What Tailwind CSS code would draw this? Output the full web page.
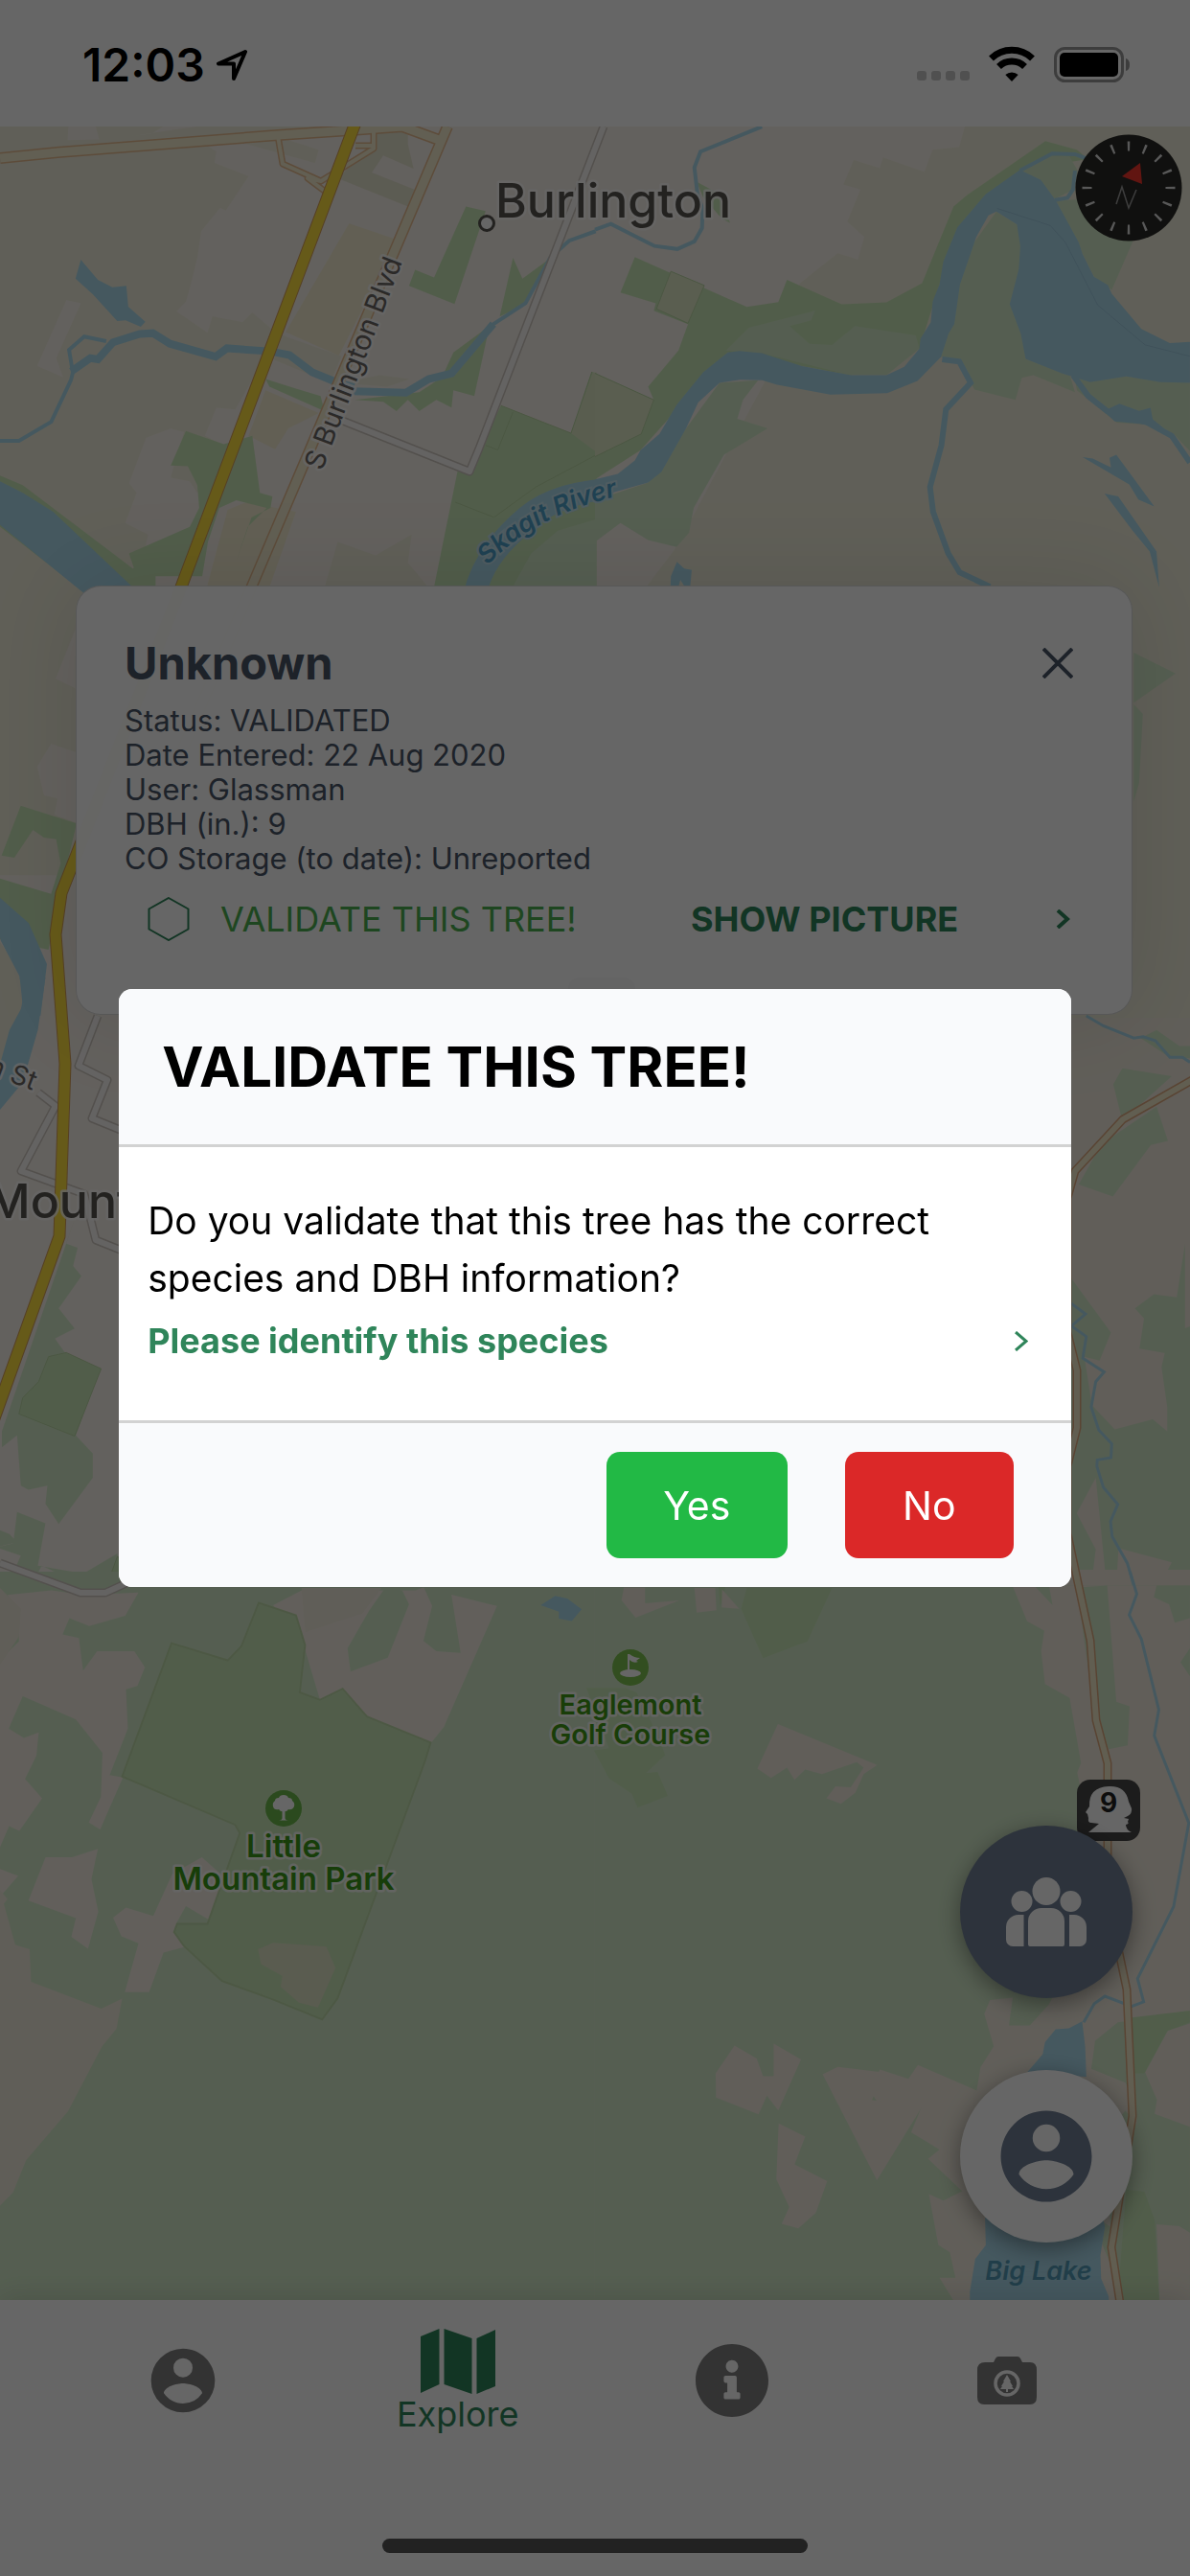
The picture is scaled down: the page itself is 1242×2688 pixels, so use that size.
<!DOCTYPE html>
<html lang="en">
<head>
<meta charset="utf-8">
<meta name="viewport" content="width=device-width, initial-scale=1">
<title>Explore</title>
<script src="https://cdn.jsdelivr.net/npm/@tailwindcss/browser@4"></script>
</head>
<body class="bg-white font-['Inter','Liberation_Sans',sans-serif]">
<div class="flex min-h-screen flex-col">

  <!-- Status bar -->
  <header class="flex h-[132px] shrink-0 items-start justify-between pl-[86px] pr-[62px] pt-[38px] text-black">
    <div class="flex items-center gap-3">
      <span class="text-[48px] leading-[60px] font-semibold">12:03</span>
      <svg class="size-8" viewBox="0 0 32 32" fill="none" stroke="currentColor" stroke-width="4" stroke-linejoin="round" aria-hidden="true"><path d="M30 2 2 14.500h16v15.500z"/></svg>
    </div>
    <div class="flex items-center gap-5 pt-2" aria-hidden="true">
      <svg class="h-10 w-[55px]" viewBox="0 0 55 40"><g fill="#c8c8c8"><rect y="28" width="10" height="10" rx="3"/><rect x="15" y="28" width="10" height="10" rx="3"/><rect x="30" y="28" width="10" height="10" rx="3"/><rect x="45" y="28" width="10" height="10" rx="3"/></g></svg>
      <svg class="h-10 w-12" viewBox="0 0 48 40" fill="none" stroke="#000" stroke-width="7"><path d="M2.500 15a31 31 0 0 1 43 0"/><path d="M10.500 23.500a19.500 19.500 0 0 1 27 0"/><path d="M24 39l-6.700-7a10 10 0 0 1 13.400 0z" fill="#000" stroke="none"/></svg>
      <svg class="h-10 w-20" viewBox="0 0 80 40"><rect x="1.500" y="4.500" width="70" height="34" rx="10" fill="none" stroke="#999" stroke-width="3"/><rect x="6" y="9" width="61" height="25" rx="5"/><path d="M75 15q4 1 4 6.500T75 28z" fill="#999"/></svg>
    </div>
  </header>

  <main class="relative flex flex-1 flex-col justify-between px-[60px] pb-[60px] pt-[479px]">
    <!-- Map -->
    <svg class="absolute inset-0 h-full w-full" viewBox="0 132 1242 2268" preserveAspectRatio="xMidYMin slice" role="img" aria-label="Map of Burlington and Mount Vernon">
      <rect y="132" width="1242" height="2268" class="fill-[#f8f2ea]"/>
      <!-- north-west -->
      <g transform="scale(.396 .3955)">
        <path class="fill-[#f0eedb]" d="M0 334H180L178 370 262 368 252 334H430L400 352 340 360 440 345 520 334H850L845 360 760 370 840 395 830 430 650 380 540 380 570 400 565 430 655 465 595 555 580 548 530 610 520 680 500 760 490 795 465 822 547 878 560 835 640 850 665 825 730 880 900 940 870 1010 700 940 620 1080 570 1075 540 1150 590 1175 520 1300 500 1270 450 1260 485 1140 450 1130 385 1155 340 1275 360 1300 330 1380 390 1410 380 1460 400 1480 350 1500 0 1260zM175 792l38 8-65 145 18 50-68-30z" fill-rule="evenodd"/>
        <path class="fill-[#f8f2ea]" d="M175 792l38 8-65 145 18 50-68-30z"/>
        <path class="fill-[#e7e5d0]" d="M1000 340h75v40l15 65-80-35-30 45 125 50-30 40-185-75 60-60z"/>
        <path class="fill-[#f5eed2]" d="M920 590l128 43-155 305-140-62zM700 1030l140 60-80 40-35 55-70-35zM600 1345l50-20 130 25-70 200H545z"/>
        <path class="fill-[#f0eedb]" d="M0 1390L230 1568H0zM890 1430l100 35 95-55-10 75 70 83H850zM900 1010l100-20 80 10-60 20z"/>
        <path class="fill-[#cbe9ba]" d="M1228 545l52 12-82 245-120-48 16-42 50 20zM1352 680l25 55 75-55-70 125-65 30zM1320 1070l185 73 55-162 12 4V1568H1140l70-345 25 20zM490 1137l100 35 75-22 20 150 33 10-5 30-50 25-40 115 30-90 50-50-80-20-45 20-30 90-15 90H360l-20-60 160-70 25-50-5-60-25-50-45-2zM0 1255l60 25 290 220 60-30v98H230L0 1390zM700 1000l80 25 65 20 10 40-145-65zM1195 930l95-70-40 185-55-15-5 45-40-20-45 30-30-30-30 30-35-25-75-5 170-20 60-40z"/>
        <path class="fill-[#dfe9c6]" d="M1505 1143l57-160h10v210z"/>
        <path class="fill-[#d5eccb]" d="M1400 1460L1470 1400 1572 1370V1568H1340z"/>
        <path class="fill-none stroke-[#bcd9a6] stroke-1" vector-effect="non-scaling-stroke" d="M1200 1325l102 40 110-80 160-85M1280 1175l32 12 40-100M1320 1070l185 73 55-162"/>
        <path class="fill-[#addcee]" d="M213 685l45 53 38 20 37-4 5 55 45 40-12 13-40-17-22 2-64-70-46-42z"/>
        <path class="fill-[#addcee]" d="M0 1270l60 30 80 50 230 218H225L0 1385z"/>
        <path class="fill-none stroke-[#addcee] stroke-[8]" vector-effect="non-scaling-stroke" d="M188 980l50-35 20 3 40-45 70-22 35-2 45 28 120 34 30-22 115 8 50 10 60 45 60 25 50 15"/>
        <path class="fill-none stroke-[#addcee] stroke-[8]" vector-effect="non-scaling-stroke" d="M930 1032l140 4 60-36 60-15 110-130"/>
        <path class="fill-none stroke-[#addcee] stroke-[4]" vector-effect="non-scaling-stroke" d="M1290 862l95-62 65-120 50-45 70-25M280 900l-58-12-40 35 10 60-5 20-52 110-85 50H0"/>
        <path class="fill-[#addcee]" d="M1220 1568Q1250 1440 1370 1340 1440 1280 1572 1265V1322Q1450 1345 1380 1420 1300 1490 1283 1568z"/>
      </g>
      <!-- north-east -->
      <g transform="translate(621 0) scale(.396 .3955)">
        <path class="fill-[#f0eedb]" d="M975 334H1568V1568H120L215 1443 450 1003 540 748 640 668 693 685 710 625 665 585 700 500 655 487 682 422 750 444 760 416 868 454 890 395 960 388z"/>
        <path class="fill-[#cbe9ba]" d="M105 678L400 810 483 797 506 738 650 803 768 798 862 747 945 545 980 515 1187 372 1270 395 1300 420 1120 448 908 750 855 920 675 990 350 930 120 1188 0 1265V985L155 1055 140 1020 220 925 245 855 155 820 160 800 67 772zM268 480L325 510 356 588 335 578 285 520z"/>
        <path class="fill-[#d5eccb]" d="M345 925L405 865 580 820 570 845 513 860 565 907 625 910 685 860 845 885 855 920 768 990 675 990 440 932zM1058 558L1112 592 1200 700 1135 947 1250 985 1265 1035 1155 990 1125 997 1108 1055 1000 1028 960 950 912 942 920 750zM430 1003L390 1055 375 1105 455 1130 340 1200 260 1340 248 1405 215 1443 140 1425 67 1380 0 1430V1320L140 1273 240 1130 328 1010zM1265 1000L1400 993 1568 1010V1190L1525 1145 1455 1120 1375 1115 1270 1030zM1215 530L1290 525 1418 636 1362 765 1315 730zM1120 448L1200 410 1250 412 1272 450 1260 500 1212 525z"/>
        <path class="fill-[#e0eac8] stroke-[#bcd9a6]" vector-effect="non-scaling-stroke" d="M200 716L288 753 245 853 162 815zM0 985L155 1055 122 1145 0 1205"/>
        <path class="fill-[#addcee]" d="M0 1265L60 1250 105 1215 120 1188 170 1145 215 1068 285 982 350 930 380 926 440 932 545 966 675 990 768 990 815 968 855 920 858 893 885 850 890 795 908 750 918 690 955 600 1030 512 1120 448 1175 475 1215 530 1275 640 1285 670 1315 730 1352 752 1362 775 1440 868 1515 905 1568 902V1010L1490 1008 1400 993 1305 1008 1230 985 1135 947 1122 880 1093 803 1117 710 1121 650 1112 592 1058 558 1037 568 1005 625 962 750 947 855 932 880 912 942 850 1005 770 1037 620 1041 480 1015 440 1003 383 1002 328 1010 272 1062 240 1130 175 1245 140 1273 45 1300 0 1322z"/>
        <path class="fill-none stroke-[#9fcbe0] stroke-1" vector-effect="non-scaling-stroke" d="M1060 550L1200 595 1240 640 1325 805 1450 910 1568 940"/>
        <path class="fill-none stroke-[#addcee] stroke-[4]" vector-effect="non-scaling-stroke" d="M1120 450L1205 405 1265 407 1300 420M1265 450L1260 500 1245 522 1212 528M440 334L278 400 262 442 270 512 284 552 282 602 262 637 217 657 157 649 97 619 42 591 0 606"/>
        <path class="fill-none stroke-[#addcee] stroke-[6]" vector-effect="non-scaling-stroke" d="M915 948L960 954 990 1010 925 1080 913 1175 883 1285 891 1350 931 1460 961 1510 1041 1548M1260 990L1300 1045 1350 1085 1455 1115 1520 1150 1568 1220"/>
        <path class="fill-[#addcee]" d="M1340 1085L1382 1065 1434 1084 1464 1076 1470 1106 1500 1130 1455 1120 1370 1112zM1285 1206L1312 1210 1360 1233 1356 1208 1374 1200 1474 1336 1432 1318 1408 1278zM1343 1302L1379 1310 1480 1455 1487 1550 1462 1455 1417 1400zM216 1482L235 1500 255 1504 249 1568 225 1530 215 1568H198L200 1520z"/>
      </g>
      <!-- west edge -->
      <g transform="translate(0 600) scale(.3333)">
        <path class="fill-[#f0eedb]" d="M0 60h270v1040H0z"/>
        <path class="fill-[#f8f2ea]" d="M236 170v185l-62-30zM160 528l80 28v220l-70-26 10-50-42-10-22-90zM0 940h360v440H0z"/>
        <path class="fill-[#cbe9ba]" d="M65 722l175 56-60 250-28 145L0 1140V950l160 48 30-95-14-76-38-5-35-24-58 87-40-7z"/>
        <path class="fill-[#f0eedb]" d="M0 1150l80 110-10 120H0z"/>
        <path class="fill-[#addcee]" d="M0 1010l90 80 57 128-20 162H62l12-66-14-60-58-110-2-10z"/>
      </g>
      <!-- west -->
      <g transform="translate(0 1020) scale(.3954 .4209)">
        <path class="fill-[#f0eedb]" d="M0 0h50v100L0 220z"/>
        <path class="fill-[#addcee]" d="M52 0h68l-20 130-40 130-60 68V215l25-85 35-60z"/>
        <path class="fill-[#d5eccb]" d="M200 590l-25 70 30 10-12 45 22 25-60 80 42 50-52 25 30 40 90 35-65 165 45 45v60l-90 115-35-50 5-45-50 10-20-10-10-125-40 30v-40zM45 1325l75 28-20 105 120 20 90-50v90l-110-20-90-40-50 90-50-20 45-95-65-20 45-10zM0 1370l25 10 20 20-45 10z"/>
        <path class="fill-[#cbe9ba] stroke-[#bcd9a6]" vector-effect="non-scaling-stroke" d="M128 940l47-10 92 40-70 167L50 1082l10-40 42-40zM310 1435l-35 90 60 20 30-60z"/>
      </g>
      <!-- south-west -->
      <g transform="translate(0 1640) scale(.396 .4847)">
        <path class="fill-[#d5eccb]" d="M0 0h1568v1568H0z"/>
        <path class="fill-[#f4eee3]" d="M20 50l115-10 90 10 140-5-35 50-95 22-52-17-18 35 43 8 11 70 37-42h98l28 35-20 40-30 7 5 85-48 100 35 5-60 112-30-15 32-55 4-95-70-72-140-50-37 70 40 20 39-12-6 50-30 50 45 42-60 70-27-10L0 593V190L50 150V90zM120 615h70l68-18-17 65 18 70-27 80-44-26 12-40-125-38zM0 640l48 15-48 45zM298 745l34-22 72 18 50-90 78-36 110 80-90 55-62-30-26 38 22 50-55 12-38 85h-64l36-105-45-15zM720 72l75-32h300l20-6 195 40-140 260-34 35-172-58-62-58-58 25-40-110z"/>
        <path class="fill-[#d5eccb]" d="M1015 35l45 5 18 30-56 115-98 30-8-50 56-80zM1118 35l70 5 26 135-64-4-34-22 23-75zM495 35h180l-90 3-90 10z"/>
        <path class="fill-[#f0ebdb]" d="M795 35h210l-50 55-150 40zM0 35l55 45-5 60-50 60zM0 685l20 20-10 10 30 88 38 10 4 70 185 58 55-22-15 65-38 38-90 140-110 105-35 70-34 28z"/>
        <path class="fill-[#cbe9ba] stroke-[#c0dcab] stroke-2" vector-effect="non-scaling-stroke" d="M452 154l148 37 36-30 46-94 98 27 24 64-14 102 53 16 60-24 64 60 168 56-15 40-230 510-41 46-130-43-134-40-100-75-26-30 8-18h80l85-195-12-18-298-104z"/>
        <path class="fill-[#e1e5c8]" d="M680 813l40-14 140 8 24 46-46 85-50-10-48-34 4-24-56-25z"/>
        <path class="fill-[#addcee]" d="M1425 72l38-20 32 6 38 23-26 25-34-5v-15z"/>
      </g>
      <!-- east of the card and dialog -->
      <g transform="translate(620 600) scale(.3967 .3333)">
        <path class="fill-[#f0eedb]" d="M1200 60h368v1340h-368z"/>
        <path class="fill-[#d5eccb]" d="M1420 243l110 65-110 92zM1420 405l24 30-10 215-14 60z"/>
      </g>
      <g transform="translate(620 1020) scale(.3967 .4209)">
        <path class="fill-[#f2ecdf]" d="M1200 100h368v1468h-368z"/>
        <path class="fill-[#d5eccb]" d="M1390 225l130 20-130 110-24-90zM1480 130l60 40h28v30h-50l-80-50zM1480 320l30 85-45 10-100 128-90-30 60-100zM1255 745l105 135-30 70-40-10 20 120 60 60 100-25 38 30v-60l-15-100 20-80 55-20v603h-313zM1555 660v300l-30-25-90-15 12-75-24-25 50-35 60 8z"/>
        <path class="fill-[#f2ecdf]" d="M1380 1415l140 35-50 90 100 28h-200zM1320 1240l35 328h-55l20-150-50-90z"/>
        <path class="fill-none stroke-[#addcee] stroke-3" vector-effect="non-scaling-stroke" d="M1295 95L1340 120 1420 150 1445 147 1477 157 1515 198H1548L1568 210M1255 808L1293 834 1256 864 1295 890 1286 944 1342 978 1320 1002 1308 1065 1328 1122 1362 1156 1360 1190 1324 1196 1323 1212 1340 1264 1378 1306 1359 1348 1363 1386 1403 1452 1427 1530 1412 1568"/>
      </g>
      <!-- south-east -->
      <g transform="translate(621 1640) scale(.396 .4847)">
        <path class="fill-[#d5eccb]" d="M0 30h1568v1538H0z"/>
        <path class="fill-[#f2ecdf]" d="M1140 30h230l110 0 88 20v900l-190 20-60 40-10 60 90 30 60 120-60-60-50 50 10 200-55-30 100 200h-450l-45-60h42l-15-55-30-15-25-110 38 14 50-20-90-70 30-20-75-37 28-55-112-5-25-30 27-45 75 20 25-30 155 55 10-50 35-45-25-70 15-30 60-5-10 60h55l50-45 40-60 95-200-50-200-10-40 10-20-30-140-65-30-10-70 8-45-45-20-68-135 20 0 115 100-10-45z"/>
        <path class="fill-[#d5eccb]" d="M1270 34l80-4 24 250 35 10-5 84-50 8-35-60zM1480 30h88v70l-40 10-15-40-40-15zM1568 165v60l-25-30zM1425 1080l55 55-5 30 93 35v370h-190l30-300 50-40-30-30z"/>
        <path class="fill-[#cbe9ba]" d="M1415 960l153-15v25l-60 20-60 90h-30zM1400 1330l48 5 27 60 12 175h-110zM385 80l15-45h225l-65 115-117 36zM80 250l30 10 60 100 15 35-50 38 30-2 27 52-80 25-15-30-60-33-40-60 40-5-60-130zM325 30h20l-15 45z"/>
        <path class="fill-[#f2ecdf]" d="M1450 1078l60-90 58-15v222l-93-28 6-30zM1480 1405l60 4 28 14v145h-80zM482 328l262 88-36 20-22 40-38 24-38-12 24-26 40 2 34-42-18-12-92 26-44-10-28 22-20-26-42 22-36-20zM70 62l6-28h56v34l90-6-115 37zM262 35h55l3 48-52 5zM335 38l45 42-46-3zM318 1080l50-60 58 28 17 38h28V1016l72 34-60 110-30-32-22 40-112-36zM484 1188l70 28-28 60 86 36-30 68-46 34-44-10 20-36-34-60zM600 1082l40-16 120 12-30 60 135 10-122 162z"/>
        <path class="fill-[#addcee]" d="M1140 1077l40-38 6-26 28-28 35-2 35-15 8 55 3 65zM1028 1390h310l6 20-12 62 2 50 20 38v30H988v-40l14-70 28-30z"/>
        <path class="fill-none stroke-[#addcee] stroke-3" vector-effect="non-scaling-stroke" d="M1410 0L1428 48 1408 93 1440 145 1486 297 1474 353 1565 541 1525 721 1430 876 1446 926 1414 936 1344 914 1316 930 1288 970"/>
      </g>

      <!-- roads -->
      <g fill="none" stroke-linejoin="round">
        <path class="stroke-[#e8bd92]" stroke-width="12" d="M0 165L60 159 290 141 365 136 420 132 458 146M467 132L187 790"/>
        <path class="stroke-[#e8bd92]" stroke-width="7" d="M290 142l5 29 40 18 55-34V134M335 189l-14-3 24 18M371 152h20"/>
        <path class="stroke-[#f4edd0]" stroke-width="9" d="M0 165L60 159 290 141 365 136 420 132 458 146M467 132L187 790"/>
        <path class="stroke-[#f4edd0]" stroke-width="4" d="M290 142l5 29 40 18 55-34V134M335 189l-14-3 24 18M371 152h20"/>
        <path class="stroke-[#cfc8c0]" stroke-width="9" d="M630 132L500 468 490 492 355 438M102 1060L82 1112 112 1127 96 1167 128 1180M40 1140l18 14-36 68 66 24 12 48 30 12M0 1631l84 31h26l35-16"/>
        <path class="stroke-[#fbf8f6]" stroke-width="6" d="M630 132L500 468 490 492 355 438M102 1060L82 1112 112 1127 96 1167 128 1180M40 1140l18 14-36 68 66 24 12 48 30 12M0 1631l84 31h26l35-16"/>
        <path class="stroke-[#d6a05a]" stroke-width="13" d="M371 128L187 618 64 932 58 975 68 1110 62 1290-6 1480"/>
        <path class="stroke-[#ffe140]" stroke-width="11" d="M371 128L187 618 64 932 58 975 68 1110 62 1290-6 1480"/>
        <path class="stroke-[#deaa80]" stroke-width="9" d="M1246 1126L1172 1168 1122 1222 1114 1250V1390L1124 1430V1490L1114 1530V1600L1138 1712 1144 1795 1156 1840V1980L1176 2076 1182 2208 1160 2345 1170 2410"/>
        <path class="stroke-[#f3eacb]" stroke-width="6" d="M1246 1126L1172 1168 1122 1222 1114 1250V1390L1124 1430V1490L1114 1530V1600L1138 1712 1144 1795 1156 1840V1980L1176 2076 1182 2208 1160 2345 1170 2410"/>
      </g>

      <!-- labels -->
      <defs>
        <path id="skagit" d="M509 590Q563 532 660 515"/>
      </defs>
      <circle cx="508" cy="233" r="7.500" class="fill-white stroke-[#585550] stroke-3"/>
      <g class="stroke-white/80 stroke-[5]" paint-order="stroke" stroke-linejoin="round">
        <text x="517" y="227" class="fill-[#585550] text-[50px] font-medium">Burlington</text>
        <text x="-14" y="1271" class="fill-[#585550] text-[50px] font-medium">Mount Vernon</text>
        <text transform="translate(336 492) rotate(-69)" class="fill-[#6b6864] text-[29px]">S Burlington Blvd</text>
        <text transform="translate(34 1138) rotate(21)" text-anchor="end" class="fill-[#6b6864] text-[28px]">Division St</text>
        <text text-anchor="middle" class="fill-[#3f9a14] text-[29px] font-semibold"><tspan x="658" y="1789">Eaglemont</tspan><tspan x="658" y="1820">Golf Course</tspan></text>
        <text text-anchor="middle" class="fill-[#3a9a18] text-[33px] font-semibold"><tspan x="296" y="1938">Little</tspan><tspan x="296" y="1972">Mountain Park</tspan></text>
      </g>
      <text class="fill-[#4fa3cc] stroke-[#c6e6f2] stroke-[4] text-[27px] font-semibold italic" paint-order="stroke"><textPath href="#skagit">Skagit River</textPath></text>
      <text x="1084" y="2379" text-anchor="middle" class="fill-[#549cb8] text-[27px] font-semibold italic">Big Lake</text>
      <!-- golf pin -->
      <circle cx="658" cy="1740" r="19" class="fill-[#7ec450]"/>
      <g class="fill-white"><ellipse cx="658" cy="1746" rx="11" ry="4"/><path d="M655 1726h2v20h-2zM657 1726q5 4 11 4l-4 3 2 1q-5 2-9-2z"/></g>
      <!-- park pin -->
      <circle cx="296" cy="1887" r="19" class="fill-[#6cb84c]"/>
      <path class="fill-white" d="M294.500 1890h3v7q0 2 3.500 2.500h-10q3.500-.5 3.500-2.500zM296 1873q4 0 5 3 4 0 4 3 3 2 2 6-2 4-6 3-2 3-5 2-3 1-5-2-5 1-6-3-1-4 2-6 0-3 4-3 1-3 5-3z"/>
      <!-- route shield -->
      <rect x="1124" y="1857" width="66" height="64" rx="14" class="fill-[#464646]"/>
      <path class="fill-white" d="M1136 1912l11-9-8-1q-4 0-3-5l-1-4-2-2 4-6q-1-20 20-21 18-1 21 16l3 7q1 5-4 8l-4 2 5 1-1 3q2 2-2 3 0 5 6 8z"/>
      <text x="1157" y="1891" text-anchor="middle" class="fill-[#222] text-[28px] font-bold">9</text>
    </svg>

    <!-- Compass -->
    <button type="button" aria-label="Compass" class="absolute right-2 top-2">
      <svg class="size-28" viewBox="-56 -56 112 112" aria-hidden="true">
        <circle r="55.500" fill="#2a2a27"/>
        <circle r="43.500" fill="none" stroke="#ddd" stroke-width="10" pathLength="160" stroke-dasharray="1.400 8.600" stroke-dashoffset=".7"/>
        <path d="M12-26L14-4-7-12z" fill="#f2352c"/>
        <path d="M-13 17L-7-1 0 21 8 2" fill="none" stroke="#999" stroke-width="1.500"/>
      </svg>
    </button>

    <!-- Tree card -->
    <section class="relative ml-[19px] h-[448px] rounded-[26px] border border-black/15 bg-white/98 pl-[50px] pr-14 pt-[50px] text-[#4a5568] shadow-[0_0_100px_rgba(0,0,0,0.1)]">
      <div class="flex items-center justify-between">
        <h2 class="text-[47px] leading-[60px] font-bold">Unknown</h2>
        <button type="button" aria-label="Close" class="flex size-[42px] items-center justify-center">
          <svg class="size-8" viewBox="0 0 32 32" stroke="currentColor" stroke-width="4" aria-hidden="true"><path d="M1 1l30 30M31 1L1 31"/></svg>
        </button>
      </div>
      <div class="mt-3 text-[31px] leading-9">
        <p>Status: VALIDATED</p>
        <p>Date Entered: 22 Aug 2020</p>
        <p>User: Glassman</p>
        <p>DBH (in.): 9</p>
        <p>CO Storage (to date): Unreported</p>
      </div>
      <div class="mt-5 flex items-center justify-between pl-6">
        <button type="button" class="flex items-center gap-8 text-[36px] leading-[50px] text-[#4caf50]">
          <svg class="h-[46px] w-11" viewBox="0 0 44 46" fill="none" stroke="#2f855a" stroke-width="2" aria-hidden="true"><path d="M22 1l20.500 11.500v21L22 45 1.500 33.500v-21z"/></svg>
          VALIDATE THIS TREE!
        </button>
        <a href="#picture" class="flex w-[404px] items-center justify-between text-[36px] leading-[50px] font-bold text-[#2f855a]">
          SHOW PICTURE
          <svg class="mr-2 h-5 w-4" viewBox="0 0 16 20" fill="none" stroke="currentColor" stroke-width="4" aria-hidden="true"><path d="M3 1l10 9-10 9"/></svg>
        </a>
      </div>
      <div class="mx-auto mt-9 h-7 w-[70px] rounded-xl bg-gray-50"></div>
    </section>

    <!-- Floating actions -->
    <div class="relative flex flex-col items-end gap-[75px]">
      <button type="button" aria-label="Community" class="flex size-[180px] items-center justify-center rounded-full bg-[#718096] shadow-[0_6px_24px_rgba(0,0,0,0.4)]">
        <svg class="h-[72px] w-[84px]" viewBox="0 0 84 72" fill="#fff" aria-hidden="true"><circle cx="42" cy="14.500" r="14.500"/><circle cx="16.500" cy="25" r="11"/><circle cx="67.500" cy="25" r="11"/><path d="M23 46a14 14 0 0 1 14-14h10a14 14 0 0 1 14 14v24a2 2 0 0 1-2 2H25a2 2 0 0 1-2-2zM18.500 39v33H7a7 7 0 0 1-7-7V52a13 13 0 0 1 13-13zM66 39v33h11a7 7 0 0 0 7-7V52a13 13 0 0 0-13-13z"/></svg>
      </button>
      <button type="button" aria-label="Account" class="flex size-[180px] items-center justify-center rounded-full bg-white shadow-[0_6px_24px_rgba(0,0,0,0.4)]">
        <svg class="size-[114px]" viewBox="0 0 24 24" fill="#718096" aria-hidden="true"><path d="M12 19.200c-2.500 0-4.710-1.280-6-3.200.03-2 4-3.100 6-3.100s5.970 1.100 6 3.100a7.232 7.232 0 0 1-6 3.200M12 5a3 3 0 0 1 3 3 3 3 0 0 1-3 3 3 3 0 0 1-3-3 3 3 0 0 1 3-3m0-3A10 10 0 0 0 2 12a10 10 0 0 0 10 10 10 10 0 0 0 10-10c0-5.530-4.500-10-10-10z"/></svg>
      </button>
    </div>
  </main>

  <!-- Tab bar -->
  <nav class="relative flex h-[288px] shrink-0 flex-col justify-between bg-white px-12 pb-6 text-[#808080] shadow-[0_0_30px_rgba(0,0,0,0.15)]">
    <div class="grid h-[168px] grid-cols-4">
      <a href="#account" aria-label="Account" class="flex items-center justify-center">
        <svg class="size-20" viewBox="0 0 24 24" fill="currentColor" aria-hidden="true"><path d="M12 19.200c-2.500 0-4.710-1.280-6-3.200.03-2 4-3.100 6-3.100s5.970 1.100 6 3.100a7.232 7.232 0 0 1-6 3.200M12 5a3 3 0 0 1 3 3 3 3 0 0 1-3 3 3 3 0 0 1-3-3 3 3 0 0 1 3-3m0-3A10 10 0 0 0 2 12a10 10 0 0 0 10 10 10 10 0 0 0 10-10c0-5.530-4.500-10-10-10z"/></svg>
      </a>
      <a href="#explore" class="flex flex-col items-center justify-center text-[36px] leading-10 text-[#2f855a]">
        <svg class="h-[70px] w-[78px]" viewBox="0 0 78 70" fill="currentColor" aria-hidden="true"><path d="M0 9L19.500 1v58L0 68zM24.500 1L53.500 11v58l-29-10zM58.500 11L78 2v59l-19.500 8z"/></svg>
        Explore
      </a>
      <a href="#info" aria-label="Information" class="flex items-center justify-center">
        <svg class="size-[76px]" viewBox="8 8 496 496" fill="currentColor" aria-hidden="true"><path d="M256 8C119.043 8 8 119.083 8 256c0 136.997 111.043 248 248 248s248-111.003 248-248C504 119.083 392.957 8 256 8zm0 110c23.196 0 42 18.804 42 42s-18.804 42-42 42-42-18.804-42-42 18.804-42 42-42zm56 254c0 6.627-5.373 12-12 12h-88c-6.627 0-12-5.373-12-12v-24c0-6.627 5.373-12 12-12h12v-64h-12c-6.627 0-12-5.373-12-12v-24c0-6.627 5.373-12 12-12h64c6.627 0 12 5.373 12 12v100h12c6.627 0 12 5.373 12 12v24z"/></svg>
      </a>
      <a href="#camera" aria-label="Camera" class="flex items-center justify-center">
        <svg class="h-[50px] w-[62px]" viewBox="0 0 62 50" aria-hidden="true"><path fill="currentColor" d="M8 6h9l2-4q1-2 3-2h20q2 0 3 2l2 4h8q7 0 7 8v28q0 8-7 8H7q-7 0-7-8V14q0-8 8-8z"/><circle cx="31" cy="28" r="12" fill="none" stroke="#fff" stroke-width="3.500"/><path fill="#fff" d="M31 19l4 7h-1l3 5h-1l2 3h-6v3h-2v-3h-6l2-3h-1l3-5h-1z"/></svg>
      </a>
    </div>
    <div class="mx-auto h-[15px] w-[444px] rounded-full bg-[#555]"></div>
  </nav>
</div>

<!-- Validation dialog -->
<div class="fixed inset-0 flex items-center justify-center bg-black/60">
  <div role="dialog" aria-modal="true" aria-labelledby="dialog-title" class="w-4/5 overflow-hidden rounded-[14px] bg-white text-black">
    <header class="border-b-3 border-[#d2d2d2] bg-[#f9fafc] px-[45px] pb-[46px] pt-[46px]">
      <h1 id="dialog-title" class="text-[58px] leading-[70px] font-bold">VALIDATE THIS TREE!</h1>
    </header>
    <div class="px-[30px] pb-12 pt-[47px] text-[39px]">
      <p class="leading-[60px]">Do you validate that this tree has the correct species and DBH information?</p>
      <a href="#identify" class="flex items-center justify-between pr-[15px] text-[36px] leading-[70px] font-bold text-[#2f855a]">
        Please identify this species
        <svg class="h-[21px] w-[14px]" viewBox="0 0 14 21" fill="none" stroke="currentColor" stroke-width="3" aria-hidden="true"><path d="M1 1l11 9.500-11 9.500"/></svg>
      </a>
    </div>
    <footer class="flex justify-end gap-[60px] border-t-3 border-[#d2d2d2] bg-[#f9fafc] px-[60px] py-[30px] text-[41px] leading-[50px] text-white">
      <button type="button" class="h-[111px] w-[189px] rounded-[14px] bg-[#22b945]">Yes</button>
      <button type="button" class="h-[111px] w-[176px] rounded-[14px] bg-[#db2828]">No</button>
    </footer>
  </div>
</div>
</body>
</html>
